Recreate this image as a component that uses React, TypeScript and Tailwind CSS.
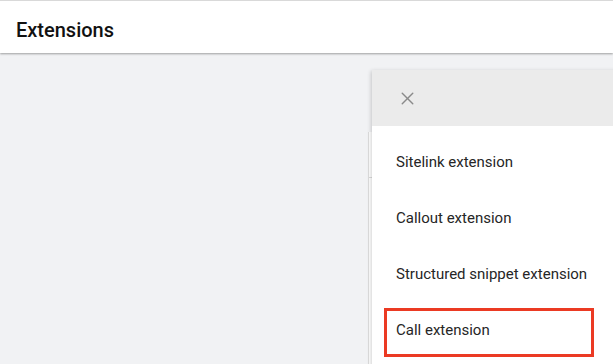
import { X } from 'lucide-react';

const items = [
    'Sitelink extension',
    'Callout extension',
    'Structured snippet extension',
    'Call extension',
];

export default function App() {
    return (
        <div className="relative w-[613px] h-[364px] overflow-hidden bg-[#f1f2f4] font-['Roboto',sans-serif]">
            {/* Barra superior */}
            <header className="relative z-10 h-[53px] bg-white border-t border-[#d9d9d9] shadow-[0_1px_2px_rgba(0,0,0,0.35)] flex items-center px-4 pt-[5px]">
                <h1 className="text-[20px] font-medium text-[#111]">Extensions</h1>
            </header>

            {/* Tarjeta de fondo, tapada por el menú */}
            <div className="absolute left-[368px] top-[132px] w-[260px] h-[240px] bg-white border-l border-[#dcdcdc]">
                <div className="h-[46px] border-b border-[#dcdcdc]"></div>
            </div>

            {/* Menú de extensiones */}
            <div className="absolute left-[372px] top-[70px] w-[250px] h-[300px] bg-white shadow-[-1px_1px_4px_rgba(0,0,0,0.18)]">
                <div className="h-[56px] bg-[#ebebeb] flex items-center pl-[25px]">
                    <X className="w-[21px] h-[21px] text-[#8a8a8a]" strokeWidth={1.6} />
                </div>
                <ul className="pt-2">
                    {items.map((item, i) => (
                        <li key={item} className="h-[56px] px-3 pt-[6px]">
                            <div
                                className={`w-[210px] h-[49px] flex items-center pl-[9px] pb-[4px] text-[15px] text-[#262626] ${
                                    i === 3 ? 'border-[3px] border-[#eb3a23]' : 'border-[3px] border-transparent'
                                }`}
                            >
                                {item}
                            </div>
                        </li>
                    ))}
                </ul>
            </div>
        </div>
    );
}
